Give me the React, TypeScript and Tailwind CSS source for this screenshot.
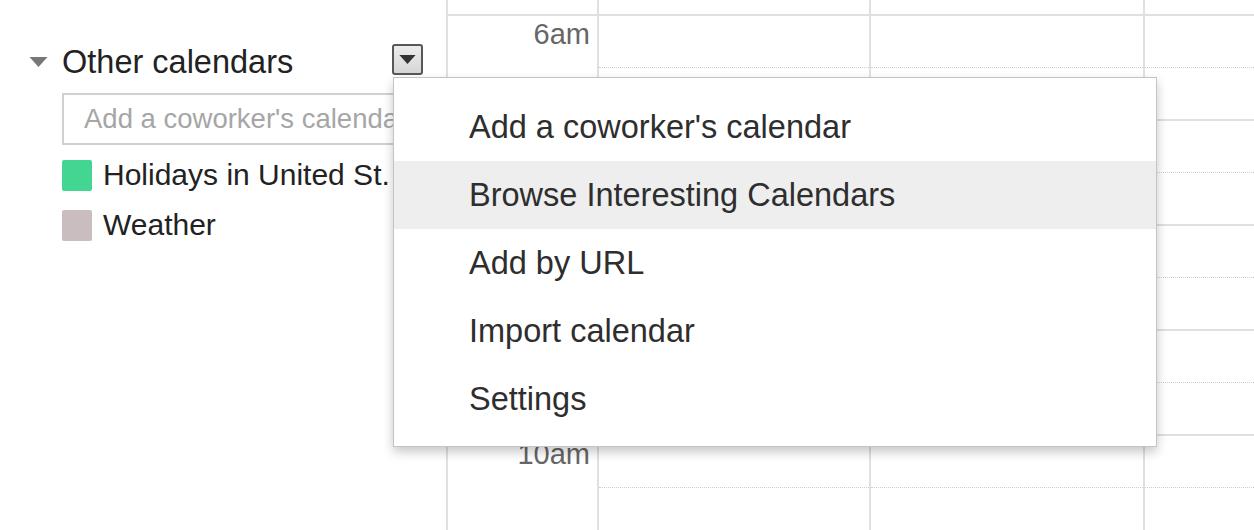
const hours = ['6am', '7am', '8am', '9am', '10am']

const menuItems = [
  { id: 'coworker', label: "Add a coworker's calendar" },
  { id: 'browse', label: 'Browse Interesting Calendars', active: true },
  { id: 'url', label: 'Add by URL' },
  { id: 'import', label: 'Import calendar' },
  { id: 'settings', label: 'Settings' },
]

const calendars = [
  { id: 'holidays', label: 'Holidays in United St.', color: 'bg-[#42d692]' },
  { id: 'weather', label: 'Weather', color: 'bg-[#cabdbf]' },
]

function Caret({ className }: { className?: string }) {
  return (
    <svg viewBox="0 0 18 10" className={className} aria-hidden>
      <path d="M0 0h18L9 10z" fill="currentColor" />
    </svg>
  )
}

function Sidebar() {
  return (
    <div className="w-[446px] shrink-0 pt-[44px] pr-[23px]">
      {/* section header */}
      <div className="flex items-start h-[31px] pl-[29px]">
        <Caret className="w-[19px] h-[10px] mt-[13px] text-[#777]" />
        <span className="ml-[14px] mt-[2px] text-[32.5px] leading-[32px] text-[#222]">
          Other calendars
        </span>
        <button
          type="button"
          className="ml-auto w-[31px] h-[31px] flex items-center justify-center rounded-[3px] border-2 border-[#575757] bg-gradient-to-b from-[#ececec] to-[#d6d6d6]"
        >
          <Caret className="w-[17px] h-[9px] text-[#333]" />
        </button>
      </div>

      <div className="ml-[62px] mt-[18px] h-[52px] border-2 border-[#d0d0d0] flex items-center pl-[20px] overflow-hidden">
        <input
          className="w-full outline-none bg-transparent text-[27.5px] leading-[32px] text-[#222] placeholder:text-[#a6a6a6]"
          placeholder="Add a coworker's calendar"
        />
      </div>

      <div className="mt-[5px] ml-[62px]">
        {calendars.map((c) => (
          <div key={c.id} className="flex items-center h-[50px]">
            <span className={`w-[30px] h-[31px] rounded-[2px] shrink-0 ${c.color}`} />
            <span className="ml-[11px] text-[30px] leading-[30px] text-[#222] whitespace-nowrap">
              {c.label}
            </span>
          </div>
        ))}
      </div>
    </div>
  )
}

function DayCells() {
  return (
    <>
      <div className="w-[272px] shrink-0 border-l-2 border-[#e0e0e0]">
        <div className="h-[52px] border-b border-dotted border-[#cfcfcf]" />
      </div>
      <div className="w-[274px] shrink-0 border-l-2 border-[#e0e0e0]">
        <div className="h-[52px] border-b border-dotted border-[#cfcfcf]" />
      </div>
      <div className="flex-1 border-l-2 border-[#e0e0e0]">
        <div className="h-[52px] border-b border-dotted border-[#cfcfcf]" />
      </div>
    </>
  )
}

function TimeGrid() {
  return (
    <div className="flex-1 flex flex-col">
      {/* tail of the previous hour */}
      <div className="flex h-[14px] shrink-0">
        <div className="w-[151px] shrink-0 border-l-2 border-[#e0e0e0]" />
        <div className="w-[272px] shrink-0 border-l-2 border-[#e0e0e0]" />
        <div className="w-[274px] shrink-0 border-l-2 border-[#e0e0e0]" />
        <div className="flex-1 border-l-2 border-[#e0e0e0]" />
      </div>
      {hours.map((h) => (
        <div key={h} className="flex h-[105px] shrink-0 border-t-2 border-[#e0e0e0]">
          <div className="w-[151px] shrink-0 border-l-2 border-[#e0e0e0] pt-[4px] pr-[7px] text-right text-[29px] leading-[28px] text-[#666]">
            {h}
          </div>
          <DayCells />
        </div>
      ))}
    </div>
  )
}

function CalendarMenu() {
  return (
    <div className="absolute left-[393px] top-[77px] w-[764px] h-[370px] pt-[15px] pb-[13px] bg-white border border-[#c4c4c4] shadow-[0_5px_10px_rgba(0,0,0,0.22)] z-10">
      {menuItems.map((item) => (
        <div
          key={item.id}
          className={`h-[68px] flex items-center pl-[75px] text-[32.5px] text-[#2e2e2e] cursor-pointer ${
            item.active ? 'bg-[#eeeeee]' : ''
          }`}
        >
          {item.label}
        </div>
      ))}
    </div>
  )
}

export default function App() {
  return (
    <div className="relative flex h-[530px] w-[1254px] overflow-hidden bg-white font-['Liberation_Sans',Arial,sans-serif]">
      <Sidebar />
      <TimeGrid />
      <CalendarMenu />
    </div>
  )
}
